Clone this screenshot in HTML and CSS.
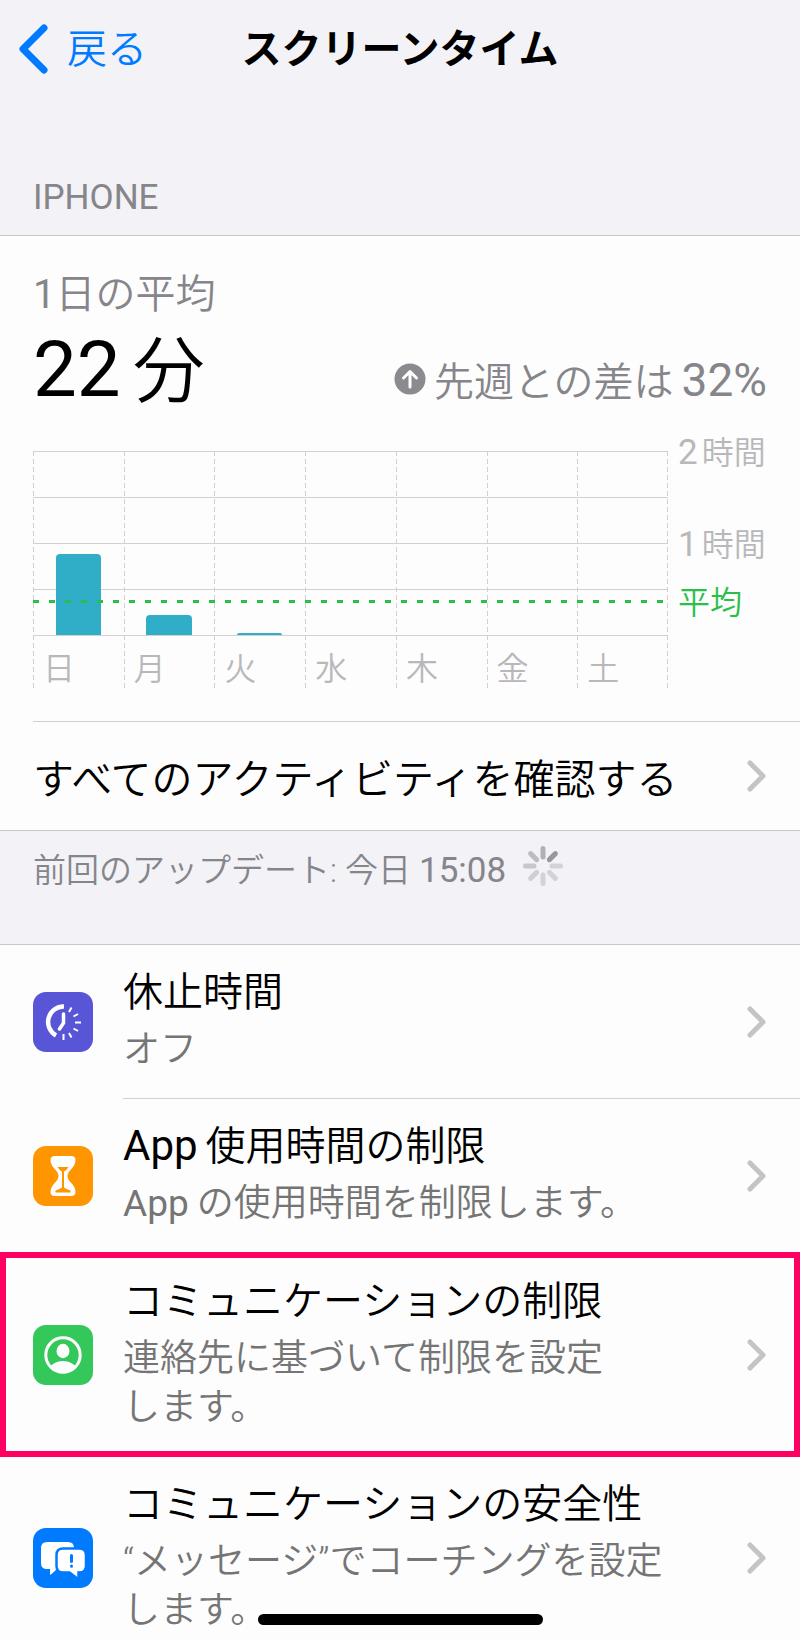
FILE: index.html
```html
<!DOCTYPE html>
<html lang="ja">
<head>
    <meta charset="UTF-8">
    <meta name="viewport" content="width=device-width, initial-scale=1.0">
    <title>スクリーンタイム</title>
    <link rel="stylesheet" href="styles.css">
</head>
<body>
    <div class="screen">
        <!-- Navigation bar -->
        <header class="navbar">
            <a href="#" class="back-link">
                <svg class="back-icon" viewBox="0 0 30 50"><path d="M25 4 L4 25 L25 46"/></svg>
                <span class="back-label">戻る</span>
            </a>
            <h1 class="nav-title">スクリーンタイム</h1>
        </header>

        <h2 class="section-label">IPHONE</h2>

        <!-- Usage summary -->
        <section class="panel summary">
            <p class="summary-label"><span class="day-count">1</span>日の平均</p>
            <div class="summary-row">
                <p class="summary-total"><span class="total-number">22</span>分</p>
                <p class="summary-diff">
                    <svg class="diff-icon" viewBox="0 0 32 32">
                        <circle cx="16" cy="16" r="15.5" fill="#8a8a8f" stroke="none"/>
                        <path d="M16 24 V9 M9.500 15 L16 8.500 L22.500 15"/>
                    </svg>
                    先週との差は<span class="diff-value">32%</span>
                </p>
            </div>

            <div class="chart">
                <div class="plot">
                    <div class="day"><div class="bar-area"><div class="bar" style="height: 44%"></div></div><span class="day-name">日</span></div>
                    <div class="day"><div class="bar-area"><div class="bar" style="height: 11%"></div></div><span class="day-name">月</span></div>
                    <div class="day"><div class="bar-area"><div class="bar" style="height: 1%"></div></div><span class="day-name">火</span></div>
                    <div class="day"><div class="bar-area"></div><span class="day-name">水</span></div>
                    <div class="day"><div class="bar-area"></div><span class="day-name">木</span></div>
                    <div class="day"><div class="bar-area"></div><span class="day-name">金</span></div>
                    <div class="day"><div class="bar-area"></div><span class="day-name">土</span></div>
                    <div class="average-line"></div>
                </div>
                <div class="scale">
                    <span class="scale-label"><span class="scale-number">2</span>時間</span>
                    <span class="scale-label"><span class="scale-number">1</span>時間</span>
                    <span class="scale-label average">平均</span>
                </div>
            </div>

            <a href="#" class="activity-link">
                すべてのアクティビティを確認する
                <svg class="chevron" viewBox="0 0 20 32"><path d="M3 3 L16 16 L3 29"/></svg>
            </a>
        </section>

        <div class="updated">
            <p>前回のアップデート: 今日 <span class="updated-time">15:08</span></p>
            <svg class="spinner" viewBox="0 0 42 42">
                <g stroke-width="5" stroke-linecap="round">
                    <path d="M21 3.500 V12" stroke="#b0b0b5"/>
                    <path d="M21 3.500 V12" stroke="#97979c" transform="rotate(45 21 21)"/>
                    <path d="M21 3.500 V12" stroke="#d3d3d7" transform="rotate(90 21 21)"/>
                    <path d="M21 3.500 V12" stroke="#d3d3d7" transform="rotate(135 21 21)"/>
                    <path d="M21 3.500 V12" stroke="#d3d3d7" transform="rotate(180 21 21)"/>
                    <path d="M21 3.500 V12" stroke="#d0d0d4" transform="rotate(225 21 21)"/>
                    <path d="M21 3.500 V12" stroke="#c8c8cc" transform="rotate(270 21 21)"/>
                    <path d="M21 3.500 V12" stroke="#bcbcc1" transform="rotate(315 21 21)"/>
                </g>
            </svg>
        </div>

        <!-- Settings list -->
        <nav class="panel settings">
            <a href="#" class="setting">
                <svg class="setting-icon downtime" viewBox="0 0 60 60">
                    <g fill="none" stroke="#fff">
                        <path d="M31 14.500 A15.500 15.500 0 0 0 23 43.500" stroke-width="4.500"/>
                        <path d="M30.500 22 V31 L26.500 37" stroke-width="3.500" stroke-linecap="round" stroke-linejoin="round"/>
                        <path d="M36 20 L38.500 15.500 M40.500 24.500 L45 22 M42 30.500 H48 M40.500 36.500 L45 39 M36 41 L38.500 45.500 M30.500 42 V48" stroke-width="2"/>
                    </g>
                </svg>
                <div class="setting-body">
                    <div class="setting-text">
                        <h3>休止時間</h3>
                        <p>オフ</p>
                    </div>
                    <svg class="chevron" viewBox="0 0 20 32"><path d="M3 3 L16 16 L3 29"/></svg>
                </div>
            </a>
            <a href="#" class="setting">
                <svg class="setting-icon limits" viewBox="0 0 60 60">
                    <path fill="#fff" d="M22 10 H38 Q42.500 10 42.500 14 C42.500 22 34.500 24 34.500 30 C34.500 36 42.500 38 42.500 46 Q42.500 50 38 50 H22 Q17.500 50 17.500 46 C17.500 38 25.500 36 25.500 30 C25.500 24 17.500 22 17.500 14 Q17.500 10 22 10 Z"/>
                    <path fill="#ff9500" d="M24.500 21 H35.500 Q34 24 31 25.500 V41.500 Q34 43.500 37.500 44.500 V46.500 H22.500 V44.500 Q26 43.500 29 41.500 V25.500 Q26 24 24.500 21 Z"/>
                </svg>
                <div class="setting-body">
                    <div class="setting-text">
                        <h3><span class="app">App</span>使用時間の制限</h3>
                        <p><span class="app">App</span>の使用時間を制限します。</p>
                    </div>
                    <svg class="chevron" viewBox="0 0 20 32"><path d="M3 3 L16 16 L3 29"/></svg>
                </div>
            </a>
            <a href="#" class="setting highlighted">
                <svg class="setting-icon contacts" viewBox="0 0 60 60">
                    <defs><clipPath id="face"><circle cx="30" cy="30" r="17"/></clipPath></defs>
                    <circle cx="30" cy="30" r="17.200" fill="none" stroke="#fff" stroke-width="3"/>
                    <g fill="#fff" clip-path="url(#face)">
                        <ellipse cx="30" cy="26" rx="6.500" ry="7.200"/>
                        <ellipse cx="30" cy="46" rx="14" ry="10"/>
                    </g>
                </svg>
                <div class="setting-body">
                    <div class="setting-text">
                        <h3>コミュニケーションの制限</h3>
                        <p>連絡先に基づいて制限を設定<br>します。</p>
                    </div>
                    <svg class="chevron" viewBox="0 0 20 32"><path d="M3 3 L16 16 L3 29"/></svg>
                </div>
            </a>
            <a href="#" class="setting">
                <svg class="setting-icon safety" viewBox="0 0 60 60">
                    <path fill="#fff" d="M14 14 H35 Q41 14 41 20 V34 Q41 41 35 41 H24 L18 46.500 Q17 47 17 46 V41 H14 Q8 41 8 35 V20 Q8 14 14 14 Z"/>
                    <path fill="#fff" stroke="#007aff" stroke-width="2.500" d="M30 20.500 H46 Q53 20.500 53 27 V38 Q53 44.500 46 44.500 H45.500 V48.500 Q45.500 51 43 49.500 L36.500 44.500 H30 Q23.500 44.500 23.500 38 V27 Q23.500 20.500 30 20.500 Z"/>
                    <path stroke="#007aff" stroke-width="3" stroke-linecap="round" d="M38.500 27.500 V33.500 M38.500 38 V38.200"/>
                </svg>
                <div class="setting-body">
                    <div class="setting-text">
                        <h3>コミュニケーションの安全性</h3>
                        <p>“メッセージ”でコーチングを設定<br>します。</p>
                    </div>
                    <svg class="chevron" viewBox="0 0 20 32"><path d="M3 3 L16 16 L3 29"/></svg>
                </div>
            </a>
        </nav>

        <div class="home-indicator"></div>
    </div>
</body>
</html>
```

FILE: styles.css
```css
* {
    box-sizing: border-box;
    margin: 0;
    padding: 0;
}

body {
    font-family: Roboto, "Noto Sans CJK JP", sans-serif;
    font-weight: 350;
    font-size: 40px;
    color: #000;
    background: #f2f2f7;
}

a {
    color: inherit;
    text-decoration: none;
}

h1, h2, h3 {
    font-weight: inherit;
    font-size: inherit;
}

svg {
    display: block;
    flex-shrink: 0;
}

.screen {
    position: relative;
    height: 100vh;
    overflow: hidden;
}

/* Navigation bar */
.navbar {
    display: grid;
    grid-template-columns: 1fr auto 1fr;
    align-items: center;
    height: 98px;
    padding: 0 19px;
}

.back-link {
    display: flex;
    align-items: center;
    gap: 18px;
    color: #007aff;
}

.back-icon {
    width: 30px;
    height: 50px;
    fill: none;
    stroke: #007aff;
    stroke-width: 7;
    stroke-linecap: round;
    stroke-linejoin: round;
}

.back-label,
.nav-title {
    padding-top: 2px;
    line-height: 58px;
}

.nav-title {
    font-weight: 700;
}

.section-label {
    padding: 80px 33px 17px;
    font-weight: 400;
    font-size: 35px;
    line-height: 40px;
    color: #85858a;
}

.panel {
    background: #fdfdfd;
    border-top: 1px solid #c8c8cc;
    border-bottom: 1px solid #c8c8cc;
}

/* Usage summary */
.summary {
    padding-left: 33px;
}

.summary-label {
    padding-top: 34px;
    line-height: 50px;
    color: #85858a;
}

.day-count,
.app,
.updated-time,
.scale-number {
    font-weight: 400;
}

.summary-row {
    display: flex;
    justify-content: space-between;
    align-items: baseline;
    padding-right: 33px;
}

.summary-total {
    font-size: 72px;
    line-height: 100px;
}

.total-number {
    margin-right: 12px;
    font-weight: 400;
    font-size: 78px;
}

.summary-diff {
    display: flex;
    align-items: baseline;
    color: #85858a;
}

.diff-icon {
    align-self: center;
    width: 32px;
    height: 32px;
    margin-right: 8px;
    fill: none;
    stroke: #fff;
    stroke-width: 3;
    stroke-linecap: round;
    stroke-linejoin: round;
}

.diff-value {
    margin-left: 8px;
    font-weight: 400;
    font-size: 46px;
}

/* Weekly chart */
.chart {
    display: flex;
    gap: 10px;
    padding: 29px 33px 31px 0;
}

.plot {
    position: relative;
    display: flex;
    flex: 1;
    background: repeating-linear-gradient(#d0d0d3 0 5px, transparent 5px 8px) right / 1px 100% no-repeat;
}

.day {
    flex: 1;
    background: repeating-linear-gradient(#d0d0d3 0 5px, transparent 5px 8px) left / 1px 100% no-repeat;
}

.bar-area {
    display: flex;
    justify-content: center;
    align-items: flex-end;
    height: 185px;
    border-bottom: 1px solid #d0d0d3;
    background: repeating-linear-gradient(#d0d0d3 0 1px, transparent 1px 46px);
}

.bar {
    width: 50%;
    background: #30aec8;
    border-radius: 4px 4px 0 0;
}

.day-name {
    display: block;
    padding: 13px 0 1px 10px;
    font-size: 32px;
    line-height: 40px;
    color: #b8b8bb;
}

.average-line {
    position: absolute;
    top: 149px;
    left: 0;
    right: 0;
    height: 3px;
    background: repeating-linear-gradient(90deg, #28c04b 0 6px, transparent 6px 16px);
}

.scale {
    width: 89px;
    margin-top: -18px;
    font-size: 32px;
    line-height: 40px;
    color: #b8b8bb;
}

.scale-label {
    display: block;
    margin-bottom: 52px;
    white-space: nowrap;
}

.scale-label:nth-child(2) {
    margin-bottom: 18px;
}

.scale-number {
    margin-right: 4px;
    font-size: 35px;
    line-height: 1;
}

.scale-label.average {
    margin-bottom: 0;
    color: #28c04b;
}

.activity-link {
    display: flex;
    justify-content: space-between;
    align-items: center;
    height: 109px;
    padding-right: 33px;
    border-top: 1px solid #d0d0d3;
    font-size: 41px;
}

.chevron {
    width: 20px;
    height: 32px;
    fill: none;
    stroke: #c4c4c6;
    stroke-width: 5;
    stroke-linecap: round;
    stroke-linejoin: round;
}

.updated {
    display: flex;
    align-items: flex-start;
    gap: 16px;
    padding: 14px 33px 47px;
    font-size: 33px;
    line-height: 52px;
    color: #85858a;
}

.updated-time {
    font-size: 35px;
    line-height: 1;
}

.spinner {
    width: 42px;
    height: 42px;
}

/* Settings list */
.setting {
    display: flex;
    align-items: center;
    padding-left: 33px;
}

.setting-icon {
    width: 60px;
    height: 60px;
    margin-right: 30px;
    border-radius: 13px;
}

.downtime {
    background: #5856d6;
}

.limits {
    background: #ff9500;
}

.contacts {
    background: #34c759;
}

.safety {
    background: #007aff;
}

.setting-body {
    display: flex;
    flex: 1;
    justify-content: space-between;
    align-items: center;
    padding-right: 33px;
}

.setting:first-child .setting-body {
    border-bottom: 1px solid #d0d0d3;
}

.setting-text {
    padding: 15px 0 24px;
}

.setting h3 {
    line-height: 65px;
}

.setting p {
    font-size: 37px;
    line-height: 49px;
    color: #757575;
}

.app {
    margin-right: 8px;
}

.setting h3 .app {
    font-size: 42px;
    line-height: 1;
}

.highlighted {
    outline: 6px solid #ff0062;
    outline-offset: -6px;
}

.highlighted .setting-text {
    padding: 17px 0 25px;
}

.home-indicator {
    position: absolute;
    bottom: 16px;
    left: 50%;
    width: 285px;
    height: 11px;
    margin-left: -142px;
    border-radius: 6px;
    background: #000;
}
```
